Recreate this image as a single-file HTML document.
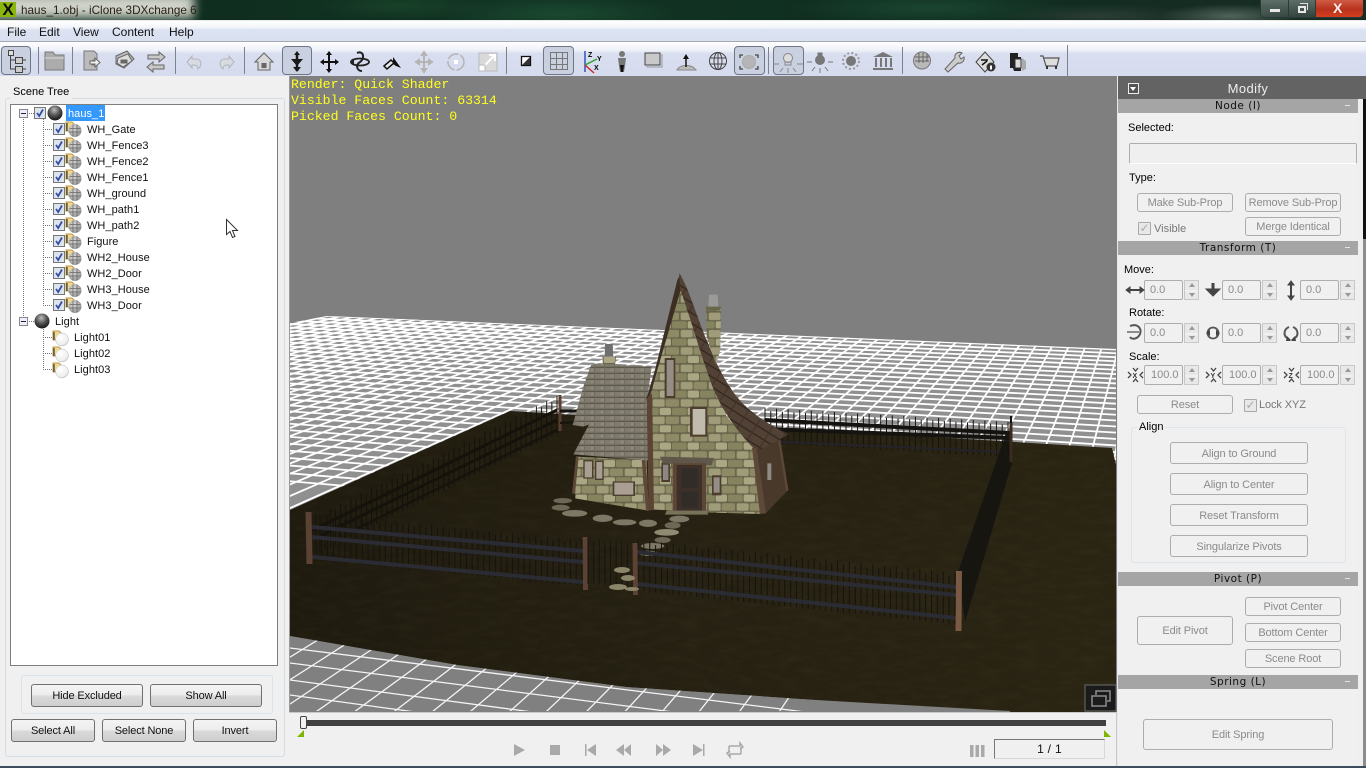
<!DOCTYPE html>
<html><head><meta charset="utf-8"><title>haus_1.obj - iClone 3DXchange 6</title>
<style>
*{box-sizing:border-box}
html,body{margin:0;padding:0;width:1366px;height:768px;overflow:hidden;background:#f0f0f0;font:11px "Liberation Sans",sans-serif;color:#000}
.a,.b,.d,.t,.h,.i,.sp,.c{position:absolute}
.t{white-space:nowrap;line-height:14px;transform:translateY(1px)}
.b,.d{display:flex;align-items:center;justify-content:center;border-radius:3px;font-size:11px;letter-spacing:-.12px;white-space:nowrap;padding-top:1px}
.b{border:1px solid #707070;background:linear-gradient(#f4f4f4 0,#ededed 45%,#d8d8d8 55%,#cfcfcf 100%);color:#111}
.d{border:1px solid #adadad;background:#f0f0f0;color:#8b8b8b}
.h{left:1118px;width:240px;height:14px;background:#a5a5a5;text-align:center;font:10.5px/14px "DejaVu Sans",sans-serif;letter-spacing:.5px;color:#111}
.h span{position:absolute;right:7px;top:-1px;color:#eee;font-size:12px}
.i{width:39px;height:20px;border:1px solid #adadad;border-radius:2px;background:#f0f0f0;color:#8b8b8b;font-size:11px;line-height:19px;padding:0 0 0 5px}
.sp{width:15px;height:20px;background:linear-gradient(#e8e8e8 0 9px,#f0f0f0 9px 11px,#e8e8e8 11px);border:1px solid #c8c8c8}
.sp:before{content:"";position:absolute;left:4px;top:2px;border:3px solid transparent;border-top:0;border-bottom:4px solid #999}
.sp:after{content:"";position:absolute;left:4px;bottom:2px;border:3px solid transparent;border-bottom:0;border-top:4px solid #999}
.c{width:13px;height:13px;border:1px solid #aaa;border-radius:1px;background:#e8e8e8;color:#aaa;font-size:12px;line-height:11px;text-align:center}
.tr{position:absolute;font-size:11px;line-height:14px;white-space:nowrap;letter-spacing:.05px;color:#111;transform:translateY(1px)}
svg{position:absolute;left:0;top:0;overflow:hidden}
</style></head><body>

<!-- title bar -->
<div class="a" style="left:0;top:0;width:1366px;height:21px;overflow:hidden;background:radial-gradient(ellipse 120px 18px at 560px 14px,#1a4830,transparent),radial-gradient(ellipse 140px 18px at 930px 8px,#1a4530,transparent),radial-gradient(ellipse 90px 14px at 400px 6px,#184028,transparent),radial-gradient(ellipse 70px 12px at 1230px 16px,#51625a,transparent),radial-gradient(ellipse 100px 12px at 1100px 16px,#2b3d35,transparent),linear-gradient(90deg,#0d2a1d,#123423 40%,#0f2c20 70%,#1a2d25);border-bottom:1px solid #e8ece8"></div>
<div class="a" style="left:0;top:0;width:206px;height:20px;overflow:hidden"><div class="a" style="left:-10px;top:-6px;width:204px;height:24px;background:rgba(235,235,225,.88);filter:blur(5px)"></div></div>
<div class="a" style="left:0;top:2px;width:16px;height:15px;background:#8ab60c;color:#0b0b0b;font:bold 17px/15px 'Liberation Sans',sans-serif;text-align:center">X</div>
<div class="t" style="left:21px;top:3px;font-size:11.7px;letter-spacing:.03px;color:#2a2015">haus_1.obj - iClone 3DXchange 6</div>
<div class="a" style="left:1260px;top:-1px;width:103px;height:19px;border:1px solid #2a3a38;border-radius:0 0 4px 4px;background:linear-gradient(rgba(150,165,160,.55),rgba(60,75,70,.7))"></div>
<div class="a" style="left:1316px;top:0;width:47px;height:17px;background:linear-gradient(#cf5b45,#b8321c 55%,#d43f20);border-radius:0 0 4px 0"></div>
<div class="a" style="left:1288px;top:0;width:1px;height:17px;background:#2a3a38"></div>
<div class="a" style="left:1315px;top:0;width:1px;height:17px;background:#2a3a38"></div>
<div class="a" style="left:1270px;top:9px;width:10px;height:3px;background:#e8e8e8"></div>
<div class="a" style="left:1298px;top:6px;width:8px;height:7px;border:2px solid #e8e8e8"></div>
<div class="a" style="left:1300px;top:3px;width:8px;height:7px;border:1px solid #ddd;border-bottom:0;border-left:0"></div>
<div class="t" style="left:1333px;top:0;font:bold 14px/15px 'Liberation Sans',sans-serif;color:#f4f0ee">X</div>

<!-- menu -->
<div class="a" style="left:0;top:21px;width:1366px;height:21px;background:linear-gradient(#fff 0,#f4f6fa 6px,#dbe2f1 9px,#d9e0f0 100%);border-bottom:1px solid #a5a9b0"></div>
<div class="t" style="left:7px;top:24px;font-size:12px;color:#111">File</div>
<div class="t" style="left:39px;top:24px;font-size:12px;color:#111">Edit</div>
<div class="t" style="left:73px;top:24px;font-size:12px;color:#111">View</div>
<div class="t" style="left:112px;top:24px;font-size:12px;color:#111">Content</div>
<div class="t" style="left:169px;top:24px;font-size:12px;color:#111">Help</div>

<!-- toolbar -->
<div class="a" style="left:0;top:42px;width:1366px;height:34px;background:linear-gradient(#fff 0,#eef1f8 8px,#d8deef 12px,#d6dcee 100%)"></div>
<div class="a" style="left:1px;top:46px;width:30px;height:29px;border:1px solid #6f7684;border-radius:4px;background:#c9d0e0"></div>
<div class="a" style="left:282px;top:46px;width:30px;height:29px;border:1px solid #6f7684;border-radius:4px;background:#c9d0e0"></div>
<div class="a" style="left:543px;top:46px;width:31px;height:29px;border:1px solid #6f7684;border-radius:4px;background:#c9d0e0"></div>
<div class="a" style="left:734px;top:46px;width:31px;height:29px;border:1px solid #6f7684;border-radius:4px;background:#c9d0e0"></div>
<div class="a" style="left:773px;top:46px;width:31px;height:29px;border:1px solid #6f7684;border-radius:4px;background:#c9d0e0"></div>
<svg width="1366" height="80" viewBox="0 0 1366 80">
<g stroke="#7d828c" stroke-width="1"><path d="M38.500 47v27M72.500 47v27M175.500 47v27M244.500 47v27M506.500 47v27M768.500 47v27M902.500 47v27M1067.500 45v31"/></g>
<!-- tree -->
<g fill="none" stroke="#444"><rect x="8.500" y="50.500" width="5" height="5" fill="#ddd"/><path d="M10.500 56v13h5M10.500 60h5"/><rect x="15.500" y="57.500" width="7" height="6" fill="#ccc"/><rect x="15.500" y="66.500" width="7" height="6" fill="#ccc"/><path d="M23 60h3M23 69h3"/></g>
<!-- folder -->
<path d="M45 52h8l2 3h9v15H45z" fill="#acacac" stroke="#777"/><path d="M45 58h19" stroke="#ddd"/>
<!-- import -->
<path d="M84 51h10l3 3v6h-4l-1 5h5v5H84z" fill="#bbb" stroke="#777"/><path d="M90 61h5v-3l5 4.500-5 4.500v-3h-5z" fill="#eee" stroke="#666"/>
<!-- export stack -->
<g stroke="#666" fill="#bbb"><path d="M116 56l11-5 7 8-10 9-8-4z"/><path d="M118 58l10-4 4 7-9 6-6-4z" fill="#ddd"/><path d="M121 60h6v3h-6z" fill="#666"/></g>
<!-- convert -->
<g fill="#c8c8c8" stroke="#666"><path d="M148 55h11v-3l6 5-6 5v-3h-11z"/><path d="M164 65h-11v-3l-6 5 6 5v-3h11z"/></g>
<!-- undo redo -->
<path d="M198 69c5-4 3-11-3-10h-3v-3l-5 6 5 6v-3h2c3 0 4 2 4 4z" fill="#d9dbe2" stroke="#b3b5bc"/>
<path d="M223 69c-5-4-3-11 3-10h3v-3l5 6-5 6v-3h-2c-3 0-4 2-4 4z" fill="#d9dbe2" stroke="#b3b5bc"/>
<!-- home -->
<path d="M255 62l9-9 9 9h-3v8h-12v-8z" fill="#d8d8d8" stroke="#666"/><rect x="261.500" y="63" width="5" height="5" fill="#666"/>
<!-- move down -->
<path d="M297 54v17" stroke="#1a1a1a" stroke-width="2.500"/><path d="M297 51l-3 4h6zM291 59h12l-6 7zM293 67h8l-4 5z" fill="#1a1a1a"/>
<!-- move all -->
<path d="M329 54v16M322 62h15" stroke="#111" stroke-width="2"/><path d="M329 51l-3 4h6zM329 73l-3-4h6zM320 62l4-3v6zM339 62l-4-3v6z" fill="#111"/>
<!-- rotate -->
<ellipse cx="360" cy="62" rx="9" ry="3.500" fill="none" stroke="#222" stroke-width="1.800"/><path d="M357 53c7-3 8 6 3 9s-3 9 2 9" fill="none" stroke="#222" stroke-width="2"/><path d="M350 62l4-2v4z" fill="#222"/>
<!-- select -->
<path d="M384 66l7-6 3 3-7 6z" fill="#eee" stroke="#111" stroke-width="1.500"/><path d="M393 57l8 11-5-2-3-2z" fill="#111"/>
<!-- disabled -->
<g stroke="#b4b4b4" stroke-width="2" fill="#b4b4b4"><path d="M424 55v14M417 62h14"/><path d="M424 52l-2 3h4zM424 72l-2-3h4zM416 62l3-2v4zM432 62l-3-2v4z"/></g>
<circle cx="456" cy="62" r="8" fill="none" stroke="#b4b4b4" stroke-width="1.500" stroke-dasharray="12 2"/><rect x="454" y="60" width="4" height="4" fill="#fff"/>
<rect x="479" y="53" width="18" height="18" fill="#d9d9d9" stroke="#bbb"/><path d="M484 66l10-10M489 55h6v6" stroke="#fff" stroke-width="2" fill="none"/><rect x="479" y="65" width="6" height="6" fill="#fff" stroke="#bbb"/>
<!-- shade -->
<rect x="521.500" y="56.500" width="9" height="9" fill="#fff" stroke="#111" stroke-width="1.300"/><path d="M522 65l8-8v8z" fill="#333"/>
<!-- grid -->
<g stroke="#777" fill="none"><rect x="550.500" y="52.500" width="17" height="17"/><path d="M556.500 52v18M562.500 52v18M550 58.500h18M550 64.500h18"/></g>
<!-- axes -->
<path d="M585 72V51" stroke="#2a55c0" stroke-width="1.500"/><path d="M585 65l12-6" stroke="#2da82d" stroke-width="1.500"/><path d="M585 65l9 8" stroke="#c92a2a" stroke-width="1.500"/>
<text x="588" y="57" font-size="7" font-family="Liberation Sans" font-weight="bold">Z</text><text x="597" y="61" font-size="7" font-family="Liberation Sans" font-weight="bold">Y</text><text x="594" y="70" font-size="7" font-family="Liberation Sans" font-weight="bold">X</text>
<!-- figure -->
<circle cx="622" cy="54" r="3" fill="#777"/><path d="M618 58h8l-1 8-1 6h-4l-1-6z" fill="#777"/><path d="M620 65h4l-1 7h-2z" fill="#111"/>
<!-- box -->
<rect x="645" y="53" width="15" height="12" fill="#c9c9c9" stroke="#444"/><path d="M660 55h2v12h-15v-2" fill="none" stroke="#999"/>
<!-- ground -->
<path d="M677 70c3-6 15-6 19 0z" fill="#bbb" stroke="#888"/><path d="M686 67V56" stroke="#111" stroke-width="1.500"/><path d="M683 59l3-5 3 5z" fill="#111"/>
<!-- globe -->
<g fill="none" stroke="#444"><circle cx="718" cy="61" r="8.500"/><ellipse cx="718" cy="61" rx="4" ry="8.500"/><path d="M710 58h16M710 64h16M718 52v18"/></g>
<!-- focus -->
<circle cx="749" cy="62" r="6.500" fill="#b5b5b5" stroke="#aaa"/><path d="M743 55h-3v3M755 55h3v3M743 69h-3v-3M755 69h3v-3" fill="none" stroke="#444" stroke-width="1.300"/>
<!-- lights -->
<g stroke="#888" fill="none"><circle cx="788" cy="58" r="4.500" fill="#ddd"/><path d="M785 62h6v3h-6zM779 64h-6M803 64h-6M783 68l-3 4M793 68l3 4M788 68v5"/></g>
<g stroke="#777" fill="#777"><circle cx="820" cy="60" r="4.500"/><rect x="818" y="53" width="4" height="3"/><path d="M812 62h-5M833 62h-5M815 67l-3 4M825 67l3 4M820 68v5" fill="none"/></g>
<g fill="#777"><circle cx="851" cy="61" r="5"/></g><circle cx="851" cy="61" r="8" fill="none" stroke="#999" stroke-width="2" stroke-dasharray="2 2.200"/>
<path d="M883 52l10 5h-20zM873 68h20v2h-20zM875 58h2v9h-2zM880 58h2v9h-2zM885 58h2v9h-2zM890 58h2v9h-2z" fill="#777"/>
<!-- sphere grid -->
<circle cx="922" cy="60.500" r="8.500" fill="#b9b9b9" stroke="#777"/><path d="M915 57h14M915 61h14M919 53v10M923 53v10M927 54v8" stroke="#666" fill="none"/>
<!-- wrench -->
<path d="M945 69l10-11c-1-4 3-7 7-5l-3 3 2 3 3-2c1 4-3 7-6 6l-10 9z" fill="#ccc" stroke="#666"/>
<!-- info -->
<path d="M976 62l9-10 9 10-9 10z" fill="#ddd" stroke="#444"/><path d="M981 60h7M982 65l5-4" stroke="#111" stroke-width="1.500"/><circle cx="991" cy="67" r="4.500" fill="#333"/><rect x="990" y="65.500" width="2" height="4" fill="#fff"/>
<!-- book -->
<path d="M1010 53h8v4h3v14h-7l-1-3h-3z" fill="#222"/><rect x="1015" y="59" width="6" height="9" fill="#ddd" stroke="#333"/><path d="M1022 58l4 3v8l-4 2z" fill="#aaa"/>
<!-- cart -->
<path d="M1040 56h3l3 10h11l2-8h-16" fill="#ddd" stroke="#555" stroke-width="1.200"/><path d="M1047 66v3M1056 66v3" stroke="#333" stroke-width="2"/>
</svg>

<!-- left panel -->
<div class="a" style="left:0;top:76px;width:289px;height:690px;background:#f0f0f0"></div>
<div class="a" style="left:5px;top:98px;width:280px;height:659px;border:1px solid #d4dde3;border-radius:3px"></div>
<div class="t" style="left:10px;top:84px;padding:0 3px;background:#f0f0f0;font-size:11px">Scene Tree</div>
<div class="a" style="left:10px;top:104px;width:268px;height:562px;background:#fff;border:1px solid #7e7e7e"></div>
<div class="a" style="left:21px;top:675px;width:252px;height:39px;border:1px solid #dbe3ea;border-radius:3px"></div>
<div class="b" style="left:31px;top:684px;width:112px;height:23px">Hide Excluded</div>
<div class="b" style="left:150px;top:684px;width:112px;height:23px">Show All</div>
<div class="b" style="left:11px;top:719px;width:84px;height:23px">Select All</div>
<div class="b" style="left:102px;top:719px;width:84px;height:23px">Select None</div>
<div class="b" style="left:193px;top:719px;width:84px;height:23px">Invert</div>

<!-- tree svg -->
<svg width="300" height="400" viewBox="0 0 300 400">
<defs>
<radialGradient id="sph" cx=".45" cy=".3" r=".8"><stop offset="0" stop-color="#bbb"/><stop offset=".45" stop-color="#555"/><stop offset="1" stop-color="#000"/></radialGradient>
<radialGradient id="lg" cx=".4" cy=".35" r=".8"><stop offset="0" stop-color="#fff"/><stop offset=".7" stop-color="#eee"/><stop offset="1" stop-color="#aaa"/></radialGradient>
<radialGradient id="mg" cx=".4" cy=".35" r=".8"><stop offset="0" stop-color="#ddd"/><stop offset="1" stop-color="#888"/></radialGradient>
<g id="ch"><rect x=".5" y=".5" width="11" height="11" fill="#dfe3ec" stroke="#777"/><path d="M3 6l2.200 3L9 2.500" fill="none" stroke="#2f4fa8" stroke-width="1.800"/></g>
<g id="pr"><path d="M0 0h6l2 2v7H0z" fill="#f3d98b" stroke="#b79a4f"/><path d="M1 1v8" stroke="#222"/><circle cx="9" cy="8.500" r="6.500" fill="url(#mg)"/><path d="M3.500 6.500h11M3 10h12M7 2.500v12M11 2.500v12" stroke="#666" stroke-width=".8"/></g>
<g id="lt"><path d="M0 0h6l2 2v7H0z" fill="#f3d98b" stroke="#b79a4f"/><path d="M1 1v8" stroke="#222"/><circle cx="9" cy="8.500" r="6.500" fill="url(#lg)" stroke="#bbb" stroke-width=".5"/></g>
<g id="mn"><rect x=".5" y=".5" width="8" height="8" fill="#eef" stroke="#888"/><path d="M2 4.500h5" stroke="#223"/></g>
</defs>
<g stroke="#777" stroke-dasharray="1 1" fill="none"><path d="M23.500 117v204M27 113.500h7M43.500 119v186M43 129.500h10M43 145.500h10M43 161.500h10M43 177.500h10M43 193.500h10M43 209.500h10M43 225.500h10M43 241.500h10M43 257.500h10M43 273.500h10M43 289.500h10M43 305.500h10M27 321.500h8M43.500 327v42M43 337.500h10M43 353.500h10M43 369.500h10"/></g>
<use href="#mn" x="19" y="109"/><use href="#ch" x="34" y="107"/><circle cx="55" cy="113" r="7.500" fill="url(#sph)"/>
<use href="#ch" x="53" y="123"/><use href="#pr" x="66" y="122"/>
<use href="#ch" x="53" y="139"/><use href="#pr" x="66" y="138"/>
<use href="#ch" x="53" y="155"/><use href="#pr" x="66" y="154"/>
<use href="#ch" x="53" y="171"/><use href="#pr" x="66" y="170"/>
<use href="#ch" x="53" y="187"/><use href="#pr" x="66" y="186"/>
<use href="#ch" x="53" y="203"/><use href="#pr" x="66" y="202"/>
<use href="#ch" x="53" y="219"/><use href="#pr" x="66" y="218"/>
<use href="#ch" x="53" y="235"/><use href="#pr" x="66" y="234"/>
<use href="#ch" x="53" y="251"/><use href="#pr" x="66" y="250"/>
<use href="#ch" x="53" y="267"/><use href="#pr" x="66" y="266"/>
<use href="#ch" x="53" y="283"/><use href="#pr" x="66" y="282"/>
<use href="#ch" x="53" y="299"/><use href="#pr" x="66" y="298"/>
<use href="#mn" x="19" y="317"/><circle cx="42" cy="321" r="7.500" fill="url(#sph)"/>
<use href="#lt" x="53" y="331"/><use href="#lt" x="53" y="347"/><use href="#lt" x="53" y="363"/>
<!-- cursor -->
<path d="M226.500 219.500v15l3.500-3 2.500 6 2.500-1-2.500-6h5z" fill="#fff" stroke="#333"/>
</svg>
<div class="a" style="left:66px;top:105px;width:39px;height:16px;background:#3399ff"></div>
<div class="tr" style="left:68px;top:106px;color:#fff">haus_1</div>
<div class="tr" style="left:87px;top:122px">WH_Gate</div>
<div class="tr" style="left:87px;top:138px">WH_Fence3</div>
<div class="tr" style="left:87px;top:154px">WH_Fence2</div>
<div class="tr" style="left:87px;top:170px">WH_Fence1</div>
<div class="tr" style="left:87px;top:186px">WH_ground</div>
<div class="tr" style="left:87px;top:202px">WH_path1</div>
<div class="tr" style="left:87px;top:218px">WH_path2</div>
<div class="tr" style="left:87px;top:234px">Figure</div>
<div class="tr" style="left:87px;top:250px">WH2_House</div>
<div class="tr" style="left:87px;top:266px">WH2_Door</div>
<div class="tr" style="left:87px;top:282px">WH3_House</div>
<div class="tr" style="left:87px;top:298px">WH3_Door</div>
<div class="tr" style="left:55px;top:314px">Light</div>
<div class="tr" style="left:74px;top:330px">Light01</div>
<div class="tr" style="left:74px;top:346px">Light02</div>
<div class="tr" style="left:74px;top:362px">Light03</div>

<!-- viewport -->
<div class="a" style="left:289px;top:76px;width:828px;height:636px;background:#7f7f7f;overflow:hidden;border-left:1px solid #9a9a9a">
<svg id="sc" width="1366" height="712" viewBox="0 0 1366 712" style="left:-290px;top:-76px">
<defs>
<clipPath id="cb"><path d="M290 323L327 316L1116 349V465L1112 448L510 411L290 510Z"/></clipPath>
<clipPath id="cf"><path d="M290 636L457 665L626 687L815 700L1010 711H290Z"/></clipPath>
<clipPath id="cg"><path d="M290 510L510 411L1112 448L1116 465V712H1010L815 700L626 687L457 665L290 636Z"/></clipPath>
<filter id="nz" x="0" y="0" width="100%" height="100%"><feTurbulence type="fractalNoise" baseFrequency=".05 .16" numOctaves="4" seed="7"/><feColorMatrix values="0 0 0 0 .28 0 0 0 0 .23 0 0 0 0 .12 1.500 0 0 0 -.55"/></filter>
<pattern id="stone" width="84" height="52" patternUnits="userSpaceOnUse"><rect width="84" height="52" fill="#68654c"/><rect x="2" y="2" width="36" height="22" rx="5" fill="#a09c7a"/><rect x="41" y="2" width="40" height="22" rx="5" fill="#8d8a65"/><rect x="-18" y="28" width="38" height="21" rx="5" fill="#86835f"/><rect x="23" y="28" width="34" height="21" rx="5" fill="#aaa785"/><rect x="60" y="28" width="40" height="21" rx="5" fill="#86835f"/></pattern>
<pattern id="shB" width="44" height="26" patternUnits="userSpaceOnUse" patternTransform="rotate(32)"><rect width="44" height="26" fill="#524135"/><rect y="22" width="44" height="4" fill="#33281f"/><rect x="20" width="3" height="26" fill="#3f3027"/></pattern>
<pattern id="shG" width="30" height="18" patternUnits="userSpaceOnUse"><rect width="30" height="18" fill="#807b6e"/><rect y="14" width="30" height="4" fill="#5c584c"/><rect x="13" width="2" height="18" fill="#6a665a"/><rect x="2" y="2" width="9" height="8" fill="#8d887b"/></pattern>
<linearGradient id="gg" x1="0" y1="0" x2="1" y2="0"><stop offset="0" stop-color="#1f1b0f"/><stop offset=".5" stop-color="#262112"/><stop offset="1" stop-color="#2a2413"/></linearGradient>
</defs>
<rect x="290" y="77" width="827" height="635" fill="#7f7f7f"/>
<path d="M290 323L327 316L1116 349V465L1112 448L510 411L290 510Z" fill="#909090"/>
<g id="gb" clip-path="url(#cb)"></g>
<path d="M290 510L510 411L1112 448L1116 465V712H1010L815 700L626 687L457 665L290 636Z" fill="url(#gg)"/>
<g clip-path="url(#cg)"><rect x="290" y="400" width="830" height="312" filter="url(#nz)" opacity=".07"/></g>
<path d="M290 636L457 665L626 687L815 700L1010 711V712H290Z" fill="#808080"/>
<g id="gf" clip-path="url(#cf)"></g>
<g id="fb"></g>

<!-- house -->
<g transform="translate(540 260) scale(.33333)">
<!-- stepping stones -->
<g fill="#6d6855"><ellipse cx="68" cy="722" rx="28" ry="8"/><ellipse cx="62" cy="743" rx="27" ry="9"/><ellipse cx="104" cy="760" rx="38" ry="10" fill="#7d7865"/><ellipse cx="188" cy="775" rx="30" ry="11" fill="#7d7865"/><ellipse cx="254" cy="787" rx="35" ry="9" fill="#7d7865"/><ellipse cx="324" cy="790" rx="27" ry="11" fill="#7d7865"/><ellipse cx="398" cy="796" rx="24" ry="10"/><ellipse cx="418" cy="777" rx="30" ry="10" fill="#7d7865"/><ellipse cx="380" cy="817" rx="37" ry="10" fill="#8f8a72"/><ellipse cx="368" cy="840" rx="24" ry="9"/><ellipse cx="338" cy="858" rx="35" ry="9" fill="#7d7865"/><ellipse cx="326" cy="880" rx="28" ry="8" fill="#7d7865"/></g>
<!-- side wall right -->
<path d="M640 565L722 538L745 690L675 762Z" fill="#48392b"/><path d="M682 610h12v50h-12z" fill="#8f8a84"/><path d="M720 540l25 150-6 5-24-150z" fill="#5e4838"/>
<!-- left chimney -->
<path d="M187 290H228L220 355H192Z" fill="url(#stone)"/><path d="M195 252H218L220 290H194Z" fill="#6f6f6f"/>
<!-- left upper roof -->
<path d="M155 310L335 320L320 430L130 500L98 495L130 380Z" fill="url(#shG)"/>
<!-- left lower wall -->
<path d="M108 590L320 600L325 752L105 715Z" fill="url(#stone)"/>
<path d="M108 590L96 700L105 702L116 592ZM305 598L318 750L328 750L316 598Z" fill="#5e4838"/>
<path d="M130 600h30v56h-30zM165 602h26v58h-26zM218 664h67v44h-67z" fill="#4d3d2f"/><path d="M134 604h22v48h-22zM169 606h18v50h-18zM223 668h57v36h-57z" fill="#a89f92"/>
<!-- left lower roof -->
<path d="M150 488L320 430L328 602L100 583L120 545Z" fill="url(#shG)"/>
<!-- stone main -->
<path d="M420 85L345 330L333 400L333 748L400 752L495 757L662 762L640 558L560 470L520 350L470 210Z" fill="url(#stone)"/>
<path d="M320 410L336 400L342 750L326 752Z" fill="#5b4434"/>
<path d="M420 45L412 60L345 330L318 420L332 402L352 330L422 90Z" fill="#3c2e23"/>
<!-- main roof -->
<path d="M418 40C445 80 470 170 500 240C525 300 545 350 590 410C640 470 700 500 748 522L662 570L636 560C580 500 530 430 500 330C475 260 450 170 420 85Z" fill="url(#shB)"/>
<path d="M636 562L650 565L678 760L660 762Z" fill="#5e4838"/>
<!-- right chimney -->
<path d="M497 145H543L541 270L528 315L500 230Z" fill="url(#stone)"/><path d="M507 104H533L535 142H505Z" fill="#9a9a98"/><path d="M497 140H543L541 152H499Z" fill="#6a664a"/>
<!-- windows -->
<rect x="374" y="294" width="32" height="120" fill="#4d3d2f"/><rect x="380" y="300" width="21" height="108" fill="#958e84"/>
<rect x="450" y="440" width="52" height="90" fill="#4d3d2f"/><rect x="458" y="447" width="38" height="77" fill="#c0bbaa"/>
<rect x="364" y="608" width="26" height="58" fill="#4d3d2f"/><rect x="369" y="614" width="16" height="46" fill="#8d8780"/>
<rect x="516" y="646" width="28" height="60" fill="#4d3d2f"/><rect x="521" y="652" width="18" height="46" fill="#958e84"/>
<!-- door -->
<path d="M360 590L522 594L515 616L368 610Z" fill="#5f574a"/>
<rect x="398" y="610" width="100" height="146" fill="#5c4636"/><rect x="410" y="615" width="76" height="137" fill="#3c3029"/><rect x="425" y="625" width="48" height="58" fill="#322c29"/><rect x="425" y="695" width="48" height="48" fill="#322c29"/>
<path d="M380 752H500L505 764H375Z" fill="#777259"/>
</g>
<g id="ff"></g>
<rect x="1085" y="685" width="31" height="26" fill="#1b1b1b" stroke="#6d6d6d"/>
<g fill="none" stroke="#8d8d8d" stroke-width="1.500"><rect x="1092" y="696" width="14" height="10"/><path d="M1096 695v-4h14v10h-3"/></g>
</svg>
<div class="t" style="left:1px;top:0;font:13.2px/16px 'Liberation Mono',monospace;color:#ffff1e;white-space:pre">Render: Quick Shader
Visible Faces Count: 63314
Picked Faces Count: 0</div>
</div>

<!-- timeline -->
<div class="a" style="left:289px;top:712px;width:828px;height:54px;background:#f0f0f0;border-top:1px solid #c8c8c8;border-right:1px solid #c8c8c8"></div>
<div class="a" style="left:304px;top:720px;width:802px;height:6px;background:#404040"></div>
<div class="a" style="left:300px;top:716px;width:7px;height:13px;background:#f2f2f2;border:1px solid #444;border-radius:2px"></div>
<svg width="1366" height="766" viewBox="0 0 1366 766">
<path d="M297 737h7v-7zM1104 730v7h7z" fill="#7fb400"/>
<g fill="#a9a9a9"><path d="M514 744l11 6-11 6z"/><rect x="550" y="745" width="10" height="10"/><path d="M585 744h1.500v12H585zM596 744v12l-9-6z"/><path d="M631 744v12l-7-6zM624 744v12l-8-6zM656 744v12l7-6zM663 744v12l8-6zM693 744v12l10-6zM703 744h1.500v12H703z"/><rect x="970" y="745" width="3.500" height="12"/><rect x="975.500" y="745" width="3.500" height="12"/><rect x="981" y="745" width="3.500" height="12"/></g>
<path d="M729 746h11v-3l3 4-3 2M741 754h-11v3l-3-4 3-2M729 746v7M741 747v7" fill="none" stroke="#a9a9a9" stroke-width="1.500"/>
</svg>
<div class="a" style="left:994px;top:739px;width:111px;height:20px;border:1px solid #d8d8d8;border-top:1px solid #777;border-left:1px solid #777;text-align:center;line-height:18px;font-size:12px;letter-spacing:.3px;color:#111">1 / 1</div>

<!-- right panel -->
<div class="a" style="left:1117px;top:76px;width:249px;height:690px;background:#f0f0f0;border-left:1px solid #e8e8e8"></div>
<div class="a" style="left:1358px;top:99px;width:4px;height:667px;background:#efefef"></div>
<div class="a" style="left:1363px;top:99px;width:3px;height:140px;background:#111"></div>
<div class="a" style="left:1363px;top:239px;width:3px;height:527px;background:#8c8c8c"></div>
<div class="a" style="left:1118px;top:76px;width:248px;height:23px;background:#636363;color:#eee;text-align:center;font:13px/25px 'Liberation Sans',sans-serif;letter-spacing:.4px"><span style="position:relative;left:6px">Modify</span></div>
<div class="a" style="left:1128px;top:83px;width:11px;height:11px;border:1px solid #eee;background:#555"></div>
<div class="a" style="left:1130px;top:87px;border:3.500px solid transparent;border-top:4px solid #fff;border-bottom:0"></div>

<div class="h" style="top:99px">Node (I)<span>–</span></div>
<div class="t" style="left:1128px;top:120px;font-size:11px">Selected:</div>
<div class="a" style="left:1129px;top:143px;width:228px;height:21px;border:1px solid #adadad;border-bottom-color:#fff;border-radius:2px;background:#efefef"></div>
<div class="t" style="left:1129px;top:170px;font-size:11px">Type:</div>
<div class="d" style="left:1137px;top:193px;width:96px;height:19px">Make Sub-Prop</div>
<div class="d" style="left:1245px;top:193px;width:96px;height:19px">Remove Sub-Prop</div>
<div class="c" style="left:1138px;top:222px">✓</div>
<div class="t" style="left:1154px;top:221px;color:#777;font-size:11px">Visible</div>
<div class="d" style="left:1245px;top:217px;width:96px;height:19px">Merge Identical</div>

<div class="h" style="top:241px">Transform (T)<span>–</span></div>
<div class="t" style="left:1124px;top:262px;font-size:11px">Move:</div>
<div class="t" style="left:1129px;top:305px;font-size:11px">Rotate:</div>
<div class="t" style="left:1129px;top:349px;font-size:11px">Scale:</div>

<div class="i" style="left:1144px;top:280px">0.0</div><div class="sp" style="left:1184px;top:280px"></div>
<div class="i" style="left:1222px;top:280px">0.0</div><div class="sp" style="left:1262px;top:280px"></div>
<div class="i" style="left:1300px;top:280px">0.0</div><div class="sp" style="left:1340px;top:280px"></div>
<div class="i" style="left:1144px;top:323px">0.0</div><div class="sp" style="left:1184px;top:323px"></div>
<div class="i" style="left:1222px;top:323px">0.0</div><div class="sp" style="left:1262px;top:323px"></div>
<div class="i" style="left:1300px;top:323px">0.0</div><div class="sp" style="left:1340px;top:323px"></div>
<div class="i" style="left:1144px;top:365px;padding-left:6px">100.0</div><div class="sp" style="left:1184px;top:365px"></div>
<div class="i" style="left:1222px;top:365px;padding-left:6px">100.0</div><div class="sp" style="left:1262px;top:365px"></div>
<div class="i" style="left:1300px;top:365px;padding-left:6px">100.0</div><div class="sp" style="left:1340px;top:365px"></div>

<svg width="1366" height="400" viewBox="0 0 1366 400">
<g fill="#444" stroke="#444">
<path d="M1128 290h14" stroke-width="2"/><path d="M1126 290l4-3v6zM1144 290l-4-3v6z"/>
<path d="M1213 283v6" stroke-width="3"/><path d="M1206 289h14l-7 7z"/>
<path d="M1291 284v13" stroke-width="2"/><path d="M1291 281l-3 4h6zM1291 300l-3-4h6z"/>
</g>
<g fill="none" stroke="#555" stroke-width="2">
<path d="M1130 326c8-3 12 3 10 8s-8 6-10 3"/><path d="M1127 332h12" stroke-width="1.300"/>
<circle cx="1213" cy="333" r="5.500" stroke-width="1.800"/><path d="M1289 327c-5 2-6 8-2 11M1293 327c5 2 6 8 2 11"/>
</g>
<path d="M1206 333l4-3v6zM1220 333l-4-3v6zM1287 336l5 5h-6zM1295 336l-5 5h6z" fill="#444"/>
<g fill="none" stroke="#444" stroke-width="1.300"><path d="M1128 372l3 3-3 3M1143 372l-3 3 3 3M1133 368l2.500 3 2.500-3M1133 382l2.500-3 2.500 3M1206 372l3 3-3 3M1221 372l-3 3 3 3M1211 368l2.500 3 2.500-3M1211 382l2.500-3 2.500 3M1284 372l3 3-3 3M1299 372l-3 3 3 3M1289 368l2.500 3 2.500-3M1289 382l2.500-3 2.500 3"/></g>
<text x="1132.500" y="378" font-size="7" font-weight="bold" font-family="Liberation Sans" fill="#333">X</text>
<text x="1210.500" y="378" font-size="7" font-weight="bold" font-family="Liberation Sans" fill="#333">Y</text>
<text x="1288.500" y="378" font-size="7" font-weight="bold" font-family="Liberation Sans" fill="#333">Z</text>
</svg>

<div class="d" style="left:1137px;top:395px;width:96px;height:19px">Reset</div>
<div class="c" style="left:1244px;top:399px">✓</div>
<div class="t" style="left:1259px;top:397px;color:#777;font-size:11px;letter-spacing:-.1px">Lock XYZ</div>

<div class="a" style="left:1131px;top:427px;width:215px;height:136px;border:1px solid #dde4ea;border-radius:3px"></div>
<div class="t" style="left:1137px;top:419px;padding:0 2px;background:#f0f0f0;font-size:11px">Align</div>
<div class="d" style="left:1170px;top:442px;width:138px;height:22px">Align to Ground</div>
<div class="d" style="left:1170px;top:473px;width:138px;height:22px">Align to Center</div>
<div class="d" style="left:1170px;top:504px;width:138px;height:22px">Reset Transform</div>
<div class="d" style="left:1170px;top:535px;width:138px;height:22px">Singularize Pivots</div>

<div class="h" style="top:572px">Pivot (P)<span>–</span></div>
<div class="d" style="left:1137px;top:616px;width:96px;height:29px">Edit Pivot</div>
<div class="d" style="left:1245px;top:597px;width:96px;height:19px">Pivot Center</div>
<div class="d" style="left:1245px;top:623px;width:96px;height:19px">Bottom Center</div>
<div class="d" style="left:1245px;top:649px;width:96px;height:19px">Scene Root</div>

<div class="h" style="top:675px">Spring (L)<span>–</span></div>
<div class="d" style="left:1143px;top:719px;width:190px;height:31px">Edit Spring</div>

<!-- bottom edge -->
<div class="a" style="left:0;top:766px;width:1366px;height:2px;background:#3d4c5e"></div>

<script>
(function(){
var NS='http://www.w3.org/2000/svg';
function L(g,x1,y1,x2,y2,c,w){var e=document.createElementNS(NS,'line');e.setAttribute('x1',x1);e.setAttribute('y1',y1);e.setAttribute('x2',x2);e.setAttribute('y2',y2);e.setAttribute('stroke',c);e.setAttribute('stroke-width',w);g.appendChild(e);}
var VA=[1180,110],VB=[-3800,140];
var gb=document.getElementById('gb'),gf=document.getElementById('gf'),fb=document.getElementById('fb'),ff=document.getElementById('ff');
var x,y,d;
for(x=-1500;x<1300;x+=24){var k=(700-VA[1])/(450-VA[1]);L(gb,VA[0],VA[1],VA[0]+(x-VA[0])*k,700,'#fff',1.800);}
y=331.7;d=3.5;while(y<520){var ka=(1300+3800)/(700+3800);L(gb,VB[0],VB[1],1300,VB[1]+(y-VB[1])*ka,'#fff',1.800);y+=d;d*=1.03;}
[85,165,245,325,408,495,585,675,770,860,960,1060,1160,1260,1370,1480].forEach(function(z){
 var bx=288+z/2.958,t;
 var by=bx<457?636+(bx-290)*.174:bx<626?665+(bx-457)*.13:bx<815?687+(bx-626)*.069:700+(bx-815)*.056;
 t=(712-VA[1])/(by-VA[1]);L(gf,VA[0],VA[1],VA[0]+(bx-VA[0])*t,712,'#f4f4f4',1.300);
});
for(x=88;x<300;x+=36){L(gf,VA[0],VA[1],VA[0]+(x-VA[0])*(712-VA[1])/(640-VA[1]),712,'#f4f4f4',1.300);}
[648,663,680,695,712].forEach(function(yy){var r=(1100+3800)/(290+3800);L(gf,VB[0],VB[1],1100,VB[1]+(yy-VB[1])*r,'#f4f4f4',1.300);});
function pick(g,x1,y1,x2,y2,n,up,dn,c,w){for(var i=0;i<=n;i++){var t=i/n,px=x1+(x2-x1)*t,py=y1+(y2-y1)*t,u=up*(i%2?.75:1);L(g,px,py-u,px,py+dn,c,w);}}
/* back fences (behind house) */
pick(fb,320,528,557,410,46,14,24,'#14120c',1);
L(fb,313,530,557,410,'#14120b',3);L(fb,320,536,557,420,'#14120b',3);L(fb,358,528,557,430,'#15130c',2.500);
L(fb,560,395,560,431,'#5a3f30',3);
L(fb,560,411,578,411,'#16140e',3);L(fb,560,423,580,422,'#16140e',2);
pick(fb,765,419,1008,433,42,11,24,'#15130f',1);
L(fb,765,420,1010,433,'#15130f',4);L(fb,765,429,1010,438,'#15130f',4);L(fb,765,441,1005,452,'#24232a',2);
var p=document.createElementNS(NS,'path');p.setAttribute('d','M1006 433L1012 433L1012 463L965 622L958 572Z');p.setAttribute('fill','#15140f');p.setAttribute('opacity','.9');fb.appendChild(p);
L(fb,1011,422,1011,462,'#3a2a20',3);L(fb,1011,416,1011,423,'#111',2);
/* front fences */
pick(ff,316,526,582,552,46,12,34,'#15130f',1);
L(ff,312,527,583,551,'#2b2b33',4);L(ff,312,537,583,562,'#2b2b33',4);L(ff,312,557,583,582,'#2b2b33',4);
L(ff,308.500,512,309.500,564,'#5c4234',6);L(ff,585,537,585.500,590,'#5c4234',5);
pick(ff,588,548,633,552,8,10,36,'#16140f',1);
pick(ff,638,553,955,586,54,13,38,'#15130f',1);
L(ff,637,552,956,587,'#2b2b33',4);L(ff,637,563,956,595,'#2b2b33',4);L(ff,637,584,956,618,'#2b2b33',4);
L(ff,635,543,635.500,595,'#5c4234',5);L(ff,959,571,958.500,631,'#7a5a43',6);
var s=[[622,570,8,3],[628,578,7,3],[618,587,9,3],[632,589,7,2]];
s.forEach(function(a){var e=document.createElementNS(NS,'ellipse');e.setAttribute('cx',a[0]);e.setAttribute('cy',a[1]);e.setAttribute('rx',a[2]);e.setAttribute('ry',a[3]);e.setAttribute('fill','#8a8468');ff.appendChild(e);});
})();
</script>
</body></html>
